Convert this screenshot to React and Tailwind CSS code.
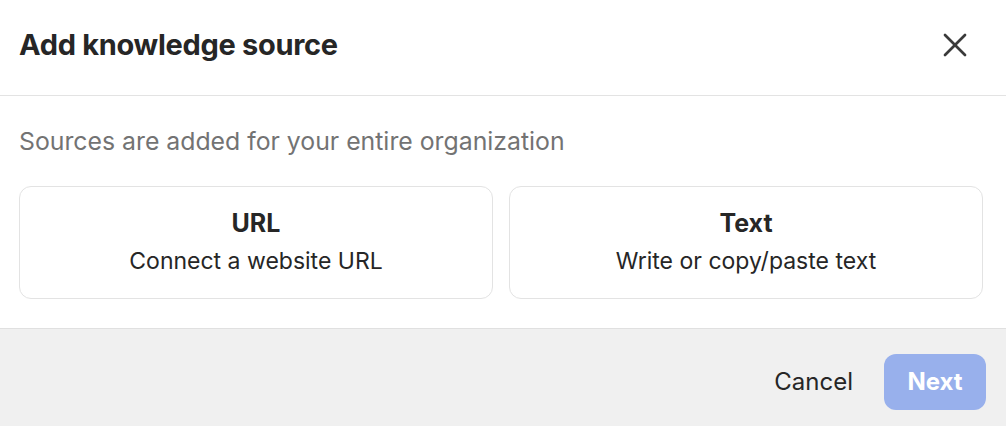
import React from 'react';
import { X } from 'lucide-react';

const SourceCard = ({ title, description }) => (
  <button className="flex-1 h-[113px] rounded-xl border border-[#e3e3e3] bg-white flex flex-col items-center justify-center gap-[14px]">
    <span className="text-[25px] font-bold text-[#262626] leading-none">{title}</span>
    <span className="text-[23px] text-[#262626] leading-none">{description}</span>
  </button>
);

export default function App() {
  return (
    <div className="w-[1006px] h-[426px] bg-white flex flex-col font-['Inter',sans-serif]">
      {/* Header */}
      <div className="h-[96px] flex items-center justify-between pl-[19px] pr-[31px] pb-[6px] border-b border-[#e3e3e3]">
        <h2 className="text-[29px] font-bold text-[#262626] tracking-[-0.3px]">Add knowledge source</h2>
        <X className="w-[40px] h-[40px] text-[#3a3a3a]" strokeWidth={1.6} />
      </div>

      {/* Body */}
      <div className="flex-1 pl-[19px] pr-[23px] pt-[33px]">
        <p className="text-[24.8px] text-[#737373] leading-none">Sources are added for your entire organization</p>
        <div className="flex gap-[16px] mt-[32px]">
          <SourceCard title="URL" description="Connect a website URL" />
          <SourceCard title="Text" description="Write or copy/paste text" />
        </div>
      </div>

      {/* Footer */}
      <div className="h-[98px] bg-[#f0f0f0] border-t border-[#e0e0e0] flex items-start justify-end gap-[31px] pr-[20px] pt-[25px]">
        <button className="h-[56px] text-[24px] text-[#262626]">Cancel</button>
        <button className="w-[102px] h-[56px] rounded-xl bg-[#98b0ec] text-white text-[24px] font-bold">Next</button>
      </div>
    </div>
  );
}
